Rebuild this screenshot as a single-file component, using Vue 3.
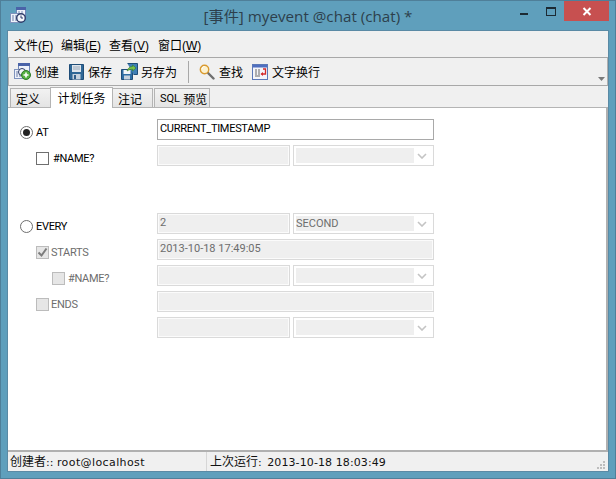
<script setup>
const menus = [
  { label: '文件(', key: 'F' },
  { label: '编辑(', key: 'E' },
  { label: '查看(', key: 'V' },
  { label: '窗口(', key: 'W' }
]
const rows = [
  { label: 'AT', control: 'radio', on: true, indent: 'i0', kind: 'full', value: 'CURRENT_TIMESTAMP', enabled: true },
  { label: '#NAME?', control: 'check', indent: 'i1', kind: 'split' },
  { label: 'EVERY', control: 'radio', indent: 'i0', kind: 'split', value: '2', select: 'SECOND', gap: true },
  { label: 'STARTS', control: 'check', on: true, off: true, indent: 'i1', kind: 'full', value: '2013-10-18 17:49:05' },
  { label: '#NAME?', control: 'check', off: true, indent: 'i2', kind: 'split' },
  { label: 'ENDS', control: 'check', off: true, indent: 'i1', kind: 'full' },
  { kind: 'split' }
]
</script>

<template>
  <div class="window">
    <header class="titlebar">
      <svg class="appicon" width="16" height="16" viewBox="0 0 16 16">
        <rect x="6.500" y="0.500" width="9" height="9" fill="#eef2fa" stroke="#6f86b8"/>
        <rect x="6" y="0" width="10" height="3" fill="#4a63a8"/>
        <path d="M8 5h2M11 5h2M8 7h2" stroke="#7a8bb5"/>
        <rect x="0.500" y="6.500" width="8" height="9" fill="#eef2fa" stroke="#7f93bd"/>
        <path d="M2 9h2M5 9h2M2 11h2M5 11h2M2 13h2M5 13h2" stroke="#6b7da8"/>
        <circle cx="11" cy="11" r="4.300" fill="#f3f6fb" stroke="#2c3a68" stroke-width="1.400"/>
        <path d="M11 8.500V11h2" stroke="#2c3a68" fill="none"/>
      </svg>
      <div class="title">[事件] myevent @chat (chat) *</div>
      <div class="wincontrols">
        <span class="min"></span>
        <span class="max"></span>
        <span class="close">
          <svg width="10" height="9" viewBox="0 0 10 9"><path d="M1.500 1l7 7M8.500 1l-7 7" stroke="#fff" stroke-width="2"/></svg>
        </span>
      </div>
    </header>

    <div class="client">
      <nav class="menubar">
        <span v-for="m in menus" :key="m.key" class="menu">{{ m.label }}<u>{{ m.key }}</u>)</span>
      </nav>

      <div class="toolbar">
        <span class="tool t-create">
          <svg width="17" height="17" viewBox="0 0 17 17">
            <rect x="4.500" y="0.500" width="11" height="10" fill="#eef2fa" stroke="#6f86b8"/>
            <rect x="4" y="0" width="12" height="3" fill="#4a63a8"/>
            <rect x="0.500" y="6.500" width="9" height="9" fill="#eef2fa" stroke="#7f93bd"/>
            <path d="M2 9h2M5 9h2M2 11h2M5 11h2M2 13h2M5 13h2" stroke="#6b7da8"/>
            <circle cx="8" cy="9" r="3.500" fill="#f3f6fb" stroke="#2c3a68"/>
            <circle cx="12" cy="12" r="4.500" fill="#55b043" stroke="#2f7a28"/>
            <path d="M12 9.500v5M9.500 12h5" stroke="#fff" stroke-width="1.600"/>
          </svg>
          创建
        </span>
        <span class="tool t-save">
          <svg width="15" height="16" viewBox="0 0 15 16">
            <path d="M0.500 0.500h14v15h-14z" fill="#2f6796" stroke="#1f4d78"/>
            <rect x="3" y="1" width="9" height="7" fill="#dfe5ec"/>
            <path d="M4 3h7M4 5h7" stroke="#9aa9ba"/>
            <rect x="3.500" y="10" width="8" height="5.500" fill="#c6d2de"/>
            <rect x="5" y="11" width="2" height="4" fill="#2f5c88"/>
          </svg>
          保存
        </span>
        <span class="tool t-saveas">
          <svg width="17" height="17" viewBox="0 0 17 17">
            <path d="M0.500 6.500h11v10h-11z" fill="#2f6ea5" stroke="#1f4d78"/>
            <rect x="2.500" y="7" width="7" height="4" fill="#f3f6fa"/>
            <rect x="3" y="12.500" width="6" height="4" fill="#c6d2de"/>
            <path d="M6.500 0.500h10v11h-4" fill="#3f7fb5" stroke="#1f4d78"/>
            <path d="M6 8c1-3 3-4.500 5.500-4.500V2l3.500 3-3.500 3V6.200C9.500 6.200 7.500 7 6 8z" fill="#7cc24a" stroke="#2f7a28" stroke-width="0.600"/>
          </svg>
          另存为
        </span>
        <span class="sep"></span>
        <span class="tool t-find">
          <svg width="16" height="16" viewBox="0 0 16 16">
            <path d="M8.500 8.500l6 6" stroke="#6f6f6f" stroke-width="2.400" stroke-linecap="round"/>
            <circle cx="5.500" cy="5.500" r="4.200" fill="#fdf2cf" stroke="#d99a2f" stroke-width="1.400"/>
            <path d="M3 5c0-1.500 1-2.500 2.500-2.500" stroke="#fff" fill="none"/>
          </svg>
          查找
        </span>
        <span class="tool t-wrap">
          <svg width="16" height="16" viewBox="0 0 16 16">
            <rect x="0.500" y="0.500" width="15" height="15" fill="#f4f5fa" stroke="#5b78b8"/>
            <rect x="1" y="1" width="14" height="2.500" fill="#4f6fc0"/>
            <path d="M3 6h2M6 6h2M3 8h2M6 8h2M3 10h2M6 10h2M3 12h5" stroke="#666"/>
            <path d="M11 5h2.500v5H9.500" fill="none" stroke="#d42a2a" stroke-width="1.300"/>
            <path d="M11 8v4l-2.500-2z" fill="#d42a2a"/>
          </svg>
          文字换行
        </span>
        <svg class="overflow" width="7" height="4" viewBox="0 0 7 4"><path d="M0 0h7L3.500 4z" fill="#7a7a7a"/></svg>
      </div>

      <div class="tabstrip">
        <span class="tab t1">定义</span>
        <span class="tab t2 active">计划任务</span>
        <span class="tab t3">注记</span>
        <span class="tab t4"><span class="latin">SQL</span>&nbsp;预览</span>
      </div>

      <main class="panel">
        <div v-for="(r, i) in rows" :key="i" class="row" :class="{ spaced: r.gap }">
          <div class="labelcol" :class="r.indent">
            <template v-if="r.label">
              <span v-if="r.control === 'radio'" class="radio"><i v-if="r.on"></i></span>
              <span v-else class="check" :class="{ off: r.off }">
                <svg v-if="r.on" width="11" height="11" viewBox="0 0 11 11"><path d="M1.500 5.500l3 3 5-7" fill="none" stroke="#7d7d7d" stroke-width="2"/></svg>
              </span>
              <span class="lbl" :class="{ dim: r.off }">{{ r.label }}</span>
            </template>
          </div>
          <div v-if="r.kind === 'full'" class="field full" :class="{ enabled: r.enabled }">{{ r.value }}</div>
          <div v-else class="splitfields">
            <div class="field left">{{ r.value }}</div>
            <div class="select">
              <span class="selvalue">{{ r.select }}</span>
              <svg width="10" height="6" viewBox="0 0 10 6"><path d="M1 1l4 4 4-4" fill="none" stroke="#c4c4c4" stroke-width="1.600"/></svg>
            </div>
          </div>
        </div>
      </main>

      <footer class="status">
        <span class="cell-a"><span class="cjk">创建者</span>:: <span class="user">root@localhost</span></span>
        <span class="cell-b"><span class="cjk">上次运行</span>: <span class="date">2013-10-18 18:03:49</span></span>
        <svg class="grip" width="9" height="9" viewBox="0 0 9 9">
          <path d="M6 0h2v2H6zM3 3h2v2H3zM6 3h2v2H6zM0 6h2v2H0zM3 6h2v2H3zM6 6h2v2H6z" fill="#bdbdbd"/>
        </svg>
      </footer>
    </div>
  </div>
</template>

<style>
html, body { margin: 0; padding: 0; background: #5f9fbc; }
</style>

<style scoped>
.window {
  width: 616px;
  height: 479px;
  box-sizing: border-box;
  background: #5f9fbc;
  border: 1px solid #4f7f99;
  display: flex;
  flex-direction: column;
  font-family: "Liberation Sans", "Noto Sans CJK SC", sans-serif;
  font-size: 12px;
  color: #000;
  overflow: hidden;
}
.titlebar {
  height: 30px;
  flex: none;
  display: flex;
  position: relative;
  justify-content: center;
  padding-top: 5px;
  box-sizing: border-box;
}
.appicon { position: absolute; left: 9px; top: 6px; }
.title {
  font-family: "Open Sans", "Noto Sans CJK SC", sans-serif;
  font-size: 15.2px;
  line-height: 20px;
  color: #2d3f4c;
}
.wincontrols {
  position: absolute;
  top: 0;
  right: 6px;
  display: flex;
  align-items: flex-start;
}
.min { width: 8px; height: 2px; background: #1c2a33; margin-top: 12px; margin-right: 18px; }
.max { width: 8px; height: 6px; border: 1px solid #1c2a33; border-top-width: 2px; margin-top: 6px; margin-right: 8px; }
.close {
  width: 45px;
  height: 20px;
  background: #c75050;
  display: flex;
  align-items: center;
  justify-content: center;
}
.client {
  margin: 0 7px 7px;
  flex: 1;
  min-height: 0;
  background: #f0f0f0;
  display: flex;
  flex-direction: column;
  box-shadow: 0 0 0 1px #5a8aa5;
}
.menubar {
  height: 26px;
  flex: none;
  display: flex;
  align-items: center;
  padding-left: 6px;
  gap: 7px;
  font-size: 12px;
}
.menu { display: inline-block; width: 41px; white-space: nowrap; }
.menu:nth-child(1) { width: 40px; }
.menu:nth-child(3) { width: 42px; }
.toolbar {
  height: 29px;
  flex: none;
  box-sizing: border-box;
  border-top: 1px solid #a8a8a8;
  border-bottom: 1px solid #a8a8a8;
  border-right: 1px solid #b0b0b0;
  border-left: 1px solid #b0b0b0;
  display: flex;
  align-items: center;
  position: relative;
  padding-left: 5px;
}
.tool { display: inline-flex; align-items: center; gap: 4px; white-space: nowrap; }
.t-save { margin-left: 10px; }
.t-saveas { margin-left: 9px; gap: 3px; }
.sep { width: 1px; height: 22px; background: #a8a8a8; margin: 0 10px 0 11px; }
.t-wrap { margin-left: 9px; }
.overflow { position: absolute; right: 2px; bottom: 4px; }
.tabstrip {
  height: 21px;
  flex: none;
  display: flex;
  align-items: flex-end;
  padding-left: 2px;
  box-sizing: border-box;
  padding-top: 1px;
}
.tab {
  box-sizing: border-box;
  height: 19px;
  border: 1px solid #b4b4b4;
  border-bottom: none;
  background: linear-gradient(#f2f2f2, #e4e4e4);
  display: flex;
  align-items: center;
  font-size: 12px;
  white-space: nowrap;
}
.t1 { width: 41px; padding-left: 5px; }
.t2 { width: 63px; justify-content: center; }
.t3 { width: 40px; border-left: none; padding-left: 5px; }
.t4 { width: 56px; margin-left: 1px; padding-left: 5px; }
.latin { font-family: Roboto, sans-serif; font-size: 11px; }
.active {
  height: 21px;
  background: #fff;
  position: relative;
  margin-left: -1px;
  margin-bottom: -1px;
  padding-bottom: 2px;
  z-index: 1;
}
.panel {
  flex: 1;
  min-height: 0;
  background: #fff;
  border-top: 1px solid #b4b4b4;
  border-bottom: 2px solid #b0b0b0;
  border-right: 2px solid #b0b0b0;
  box-sizing: border-box;
  padding-top: 11px;
  font-family: Roboto, "Noto Sans CJK SC", sans-serif;
}
.row { display: flex; height: 21px; margin-bottom: 5px; }
.row.spaced { margin-top: 47px; }
.labelcol {
  width: 149px;
  flex: none;
  box-sizing: border-box;
  display: flex;
  align-items: center;
  height: 26px;
  font-size: 11px;
}
.i0 { padding-left: 12px; }
.i1 { padding-left: 28px; }
.i2 { padding-left: 44px; }
.radio {
  width: 13px;
  height: 13px;
  box-sizing: border-box;
  border: 1px solid #6f6f6f;
  border-radius: 50%;
  background: #fff;
  display: flex;
  align-items: center;
  justify-content: center;
  margin-right: 3px;
}
.radio i { width: 7px; height: 7px; border-radius: 50%; background: #222; }
.check {
  width: 13px;
  height: 13px;
  box-sizing: border-box;
  border: 1px solid #6f6f6f;
  background: #fff;
  display: flex;
  align-items: center;
  justify-content: center;
  margin-right: 4px;
}
.check.off { background: #e6e6e6; border-color: #bcbcbc; margin-right: 3px; }
.i1 .check.off { margin-right: 2px; }
.lbl { white-space: nowrap; letter-spacing: -0.3px; }
.lbl.dim { color: #6d6d6d; }
.field {
  box-sizing: border-box;
  height: 21px;
  border: 1px solid #dadada;
  background: #efefef;
  box-shadow: inset 0 0 0 1px #fbfbfb;
  color: #6d6d6d;
  font-size: 11px;
  line-height: 18px;
  padding-left: 2px;
  white-space: nowrap;
}
.full { width: 277px; }
.full.enabled {
  border-color: #a9a9a9;
  background: #fff;
  box-shadow: none;
  color: #000;
  letter-spacing: -0.3px;
}
.splitfields { display: flex; gap: 3px; width: 277px; }
.left { width: 133px; flex: none; }
.select {
  box-sizing: border-box;
  width: 141px;
  height: 21px;
  border: 1px solid #dadada;
  background: #fff;
  display: flex;
  align-items: center;
  padding: 0 6px 0 2px;
  justify-content: space-between;
}
.selvalue {
  width: 118px;
  height: 15px;
  background: #efefef;
  color: #6d6d6d;
  font-size: 11px;
  line-height: 15px;
}
.status {
  height: 19px;
  flex: none;
  display: flex;
  align-items: center;
  position: relative;
  font-family: "DejaVu Sans", "Noto Sans CJK SC", sans-serif;
  font-size: 11px;
  color: #111;
}
.cjk { font-size: 12px; }
.user { letter-spacing: 0.4px; }
.date { letter-spacing: 0.1px; margin-left: 2px; }
.cell-a { width: 199px; height: 19px; padding: 1px 0 0 2px; box-sizing: border-box; border-right: 1px solid #d6d6d6; line-height: 18px; white-space: nowrap; }
.cell-b { padding: 1px 0 0 3px; line-height: 18px; white-space: nowrap; }
.grip { position: absolute; right: 2px; bottom: 1px; }
</style>
